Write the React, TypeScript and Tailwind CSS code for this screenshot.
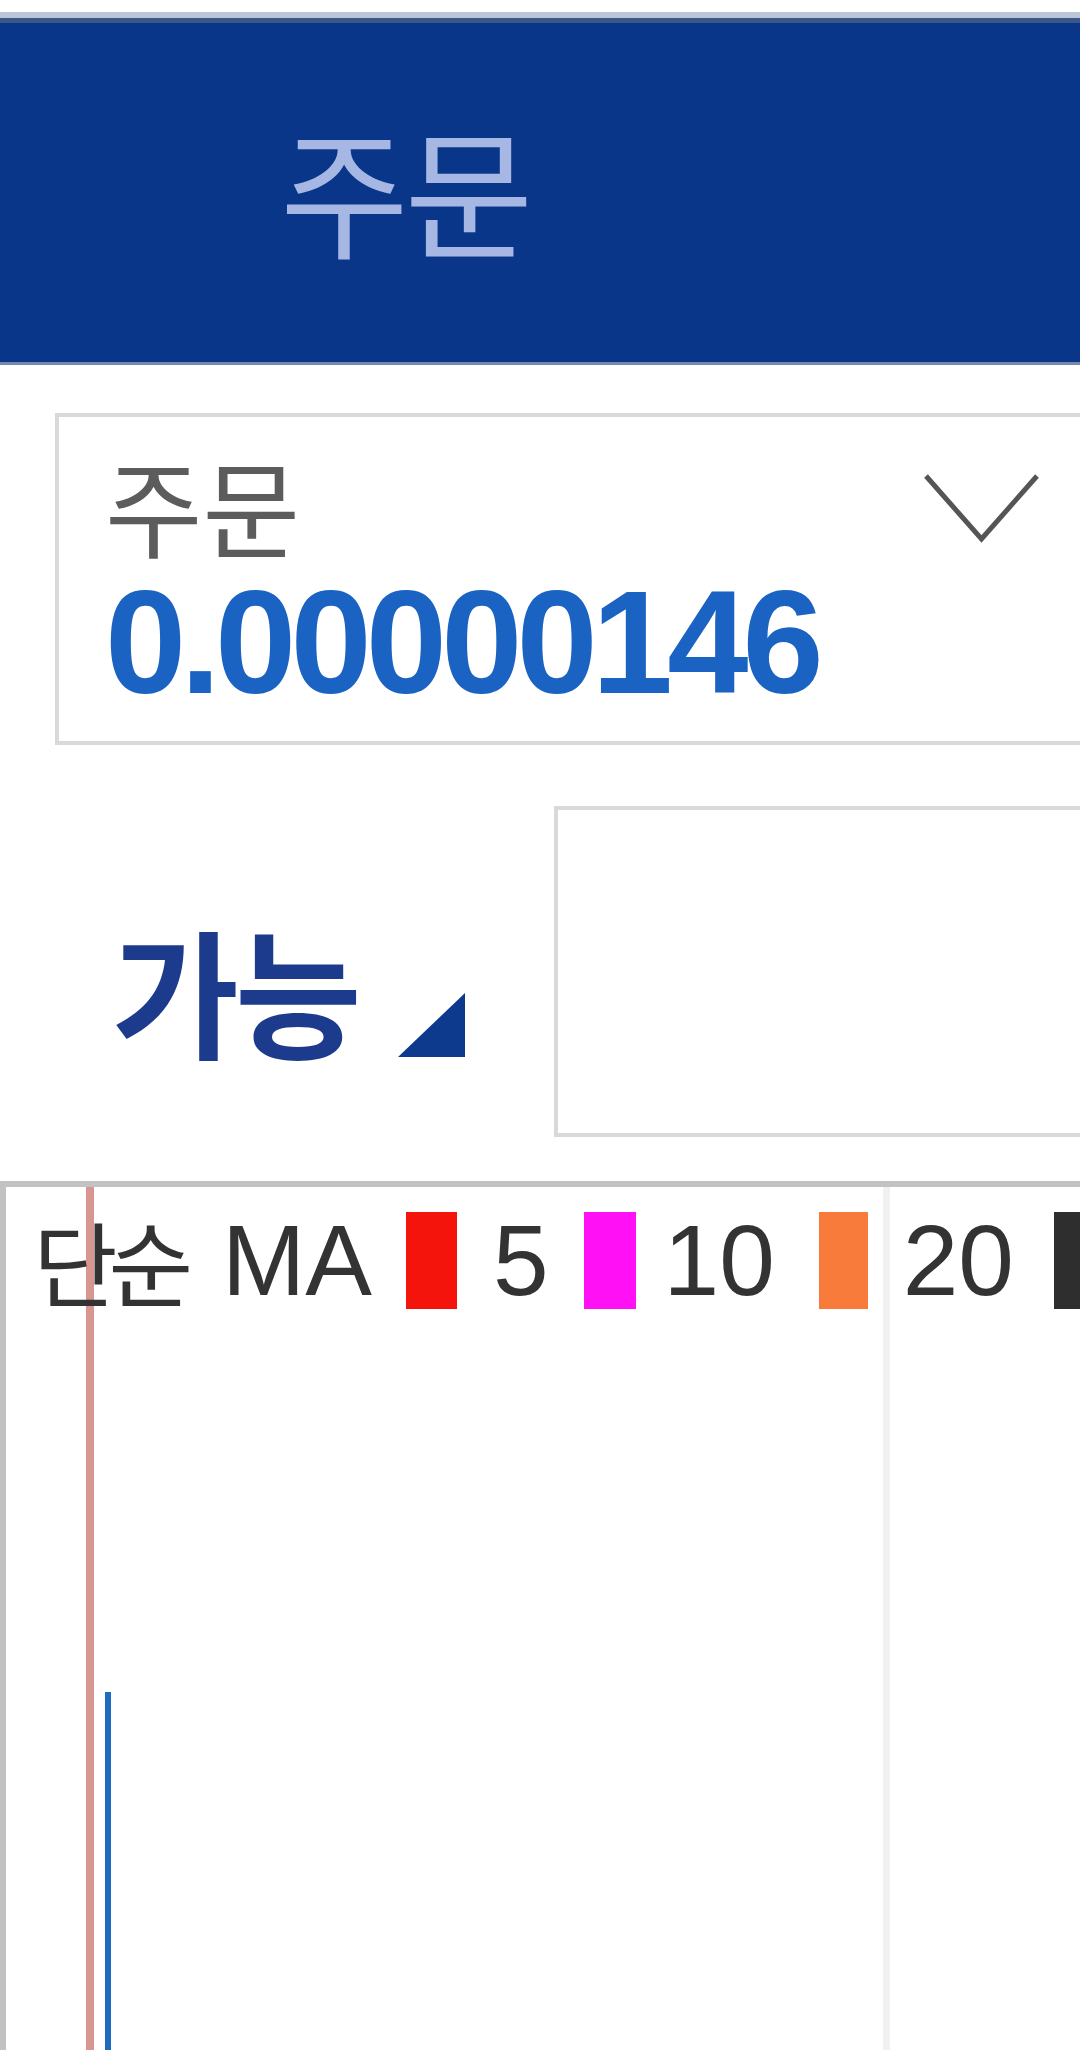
export default function App() {
  return (
    <div className="w-[1080px] h-[2050px] overflow-hidden bg-white font-['Liberation_Sans','Noto_Sans_CJK_KR',sans-serif]">
      {/* top bar */}
      <div className="h-[12px] bg-white" />
      <div className="h-[6px] bg-[#bcc6d6]" />
      <div className="h-[5px] bg-[#3a5787]" />
      <header className="h-[339px] bg-[#0a3689] flex items-center pl-[280px]">
        <span className="font-['Noto_Sans_CJK_KR',sans-serif] text-[140px] leading-none font-normal text-[#a5b7e2] tracking-[-0.03em] -mt-[12px]">
          주문
        </span>
      </header>
      <div className="h-[3px] bg-[#7488b0]" />

      {/* order type select */}
      <div className="mt-[48px] ml-[55px] w-[1100px] h-[332px] border-[4px] border-[#d9d9d9] flex">
        <div className="w-[864px] shrink-0 pl-[46px] pt-[34px] flex flex-col">
          <span className="font-['Noto_Sans_CJK_KR',sans-serif] text-[106px] leading-none text-[#5c5c5c] whitespace-nowrap">
            주문
          </span>
          <span className="mt-[13px] text-[146px] leading-none font-bold tracking-[-0.04em] text-[#1b63c2] whitespace-nowrap">
            0.00000146
          </span>
        </div>
        <svg width="117" height="70" viewBox="0 0 117 70" className="mt-[56px] shrink-0">
          <polyline points="3,3 58.5,66 114,3" fill="none" stroke="#555" strokeWidth="5" />
        </svg>
      </div>

      {/* available row */}
      <div className="mt-[61px] flex h-[331px]">
        <div className="w-[554px] shrink-0 pl-[112px] flex items-end pb-[80px]">
          <span className="font-['Noto_Sans_CJK_KR',sans-serif] text-[138px] leading-none font-bold text-[#1c3b8c] whitespace-nowrap tracking-[-0.03em]">
            가능
          </span>
          <svg width="67" height="64" viewBox="0 0 67 64" className="ml-[40px] mb-[0px] shrink-0">
            <polygon points="67,0 67,64 0,64" fill="#0e3a8e" />
          </svg>
        </div>
        <div className="flex-1 border-[4px] border-r-0 border-[#d9d9d9]" />
      </div>

      {/* chart */}
      <div className="relative mt-[44px] h-[869px] border-t-[6px] border-l-[6px] border-[#c2c2c2]">
        <svg className="absolute left-0 top-0" width="1074" height="863">
          <rect x="877" y="0" width="7" height="863" fill="#f1f1f1" />
          <rect x="80" y="0" width="8" height="863" fill="#d9958f" />
          <rect x="99" y="505" width="6" height="358" fill="#1d6cc0" />
        </svg>
        <div className="relative flex items-center whitespace-nowrap pt-[23px] pl-[27px] text-[100px] leading-none text-[#333]">
          <span className="shrink-0 font-['Noto_Sans_CJK_KR',sans-serif] text-[92px] tracking-[-0.1em]">단순</span>
          <span className="shrink-0 ml-[38px]">MA</span>
          <span className="shrink-0 ml-[34px] w-[51px] h-[97px] bg-[#f5140c]" />
          <span className="shrink-0 ml-[36px]">5</span>
          <span className="shrink-0 ml-[35px] w-[52px] h-[97px] bg-[#ff10f5]" />
          <span className="shrink-0 ml-[28px]">10</span>
          <span className="shrink-0 ml-[44px] w-[49px] h-[97px] bg-[#f97b3c]" />
          <span className="shrink-0 ml-[35px]">20</span>
          <span className="shrink-0 ml-[40px] w-[50px] h-[97px] bg-[#2e2e2e]" />
        </div>
      </div>
    </div>
  );
}
